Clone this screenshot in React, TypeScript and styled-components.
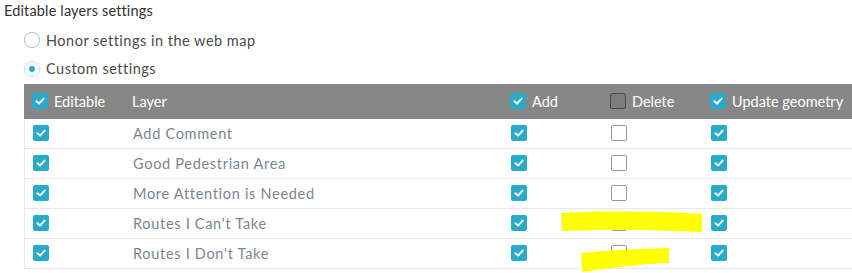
import React from "react";
import styled, { createGlobalStyle } from "styled-components";

const Global = createGlobalStyle`
  html, body { margin: 0; padding: 0; background: #fff; }
  body { font-family: Lato, "Noto Sans", "Liberation Sans", sans-serif; width: 852px; height: 273px; overflow: hidden; }
`;

const Page = styled.div`
  position: relative;
  width: 852px;
  height: 273px;
  overflow: hidden;
`;

const Title = styled.div`
  font-size: 14.5px;
  letter-spacing: 0.15px;
  color: #323232;
  padding: 2px 0 0 4px;
  height: 20px;
  line-height: 18px;
`;

const RadioGroup = styled.div`
  display: flex;
  flex-direction: column;
  padding-left: 24px;
  margin-top: 8px;
  gap: 8.5px;
`;

const RadioRow = styled.label`
  display: flex;
  align-items: center;
  gap: 6px;
  height: 20px;
  font-size: 14.5px;
  letter-spacing: 0.5px;
  color: #4a4a4a;
`;

const RadioCircle = styled.span<{ $on?: boolean }>`
  width: 14px;
  height: 14px;
  border-radius: 50%;
  border: 1px solid ${(p) => (p.$on ? "#b9dfe8" : "#b8b8b8")};
  background: #fff;
  display: flex;
  align-items: center;
  justify-content: center;
  &::after {
    content: "";
    display: ${(p) => (p.$on ? "block" : "none")};
    width: 6px;
    height: 6px;
    border-radius: 50%;
    background: #2aa9c6;
  }
`;

const Table = styled.div`
  margin: 5px 0 0 24px;
  width: 828px;
`;

const cols = "100px 378px 100px 100px 1fr";

const HeaderRow = styled.div`
  display: grid;
  grid-template-columns: ${cols};
  height: 35px;
  background: #878787;
  align-items: center;
`;

const Row = styled.div`
  display: grid;
  grid-template-columns: ${cols};
  height: 29px;
  border-bottom: 1px solid #e9e9e9;
  border-left: 1px solid #ececec;
  align-items: center;
`;

const Cell = styled.div<{ $head?: boolean }>`
  display: flex;
  align-items: center;
  gap: 6px;
  padding-left: 8px;
  font-size: 14.5px;
  letter-spacing: ${(p) => (p.$head ? "0" : "0.7px")};
  color: ${(p) => (p.$head ? "#ffffff" : "#7a8593")};
  white-space: nowrap;
`;

const Box = styled.span<{ $on?: boolean; $head?: boolean }>`
  box-sizing: border-box;
  width: 16px;
  height: 16px;
  border-radius: 2px;
  flex: none;
  display: flex;
  align-items: center;
  justify-content: center;
  background: ${(p) => (p.$on ? "#28abcb" : p.$head ? "#7d7d7d" : "#ffffff")};
  border: ${(p) => (p.$on ? "none" : p.$head ? "1px solid #4c4c4c" : "1px solid #9a9a9a")};
`;

const Check = ({ on, head }: { on?: boolean; head?: boolean }) => (
  <Box $on={on} $head={head}>
    {on && (
      <svg width="12" height="12" viewBox="0 0 12 12">
        <path d="M2.4 6.2 L5 8.6 L9.6 3.6" fill="none" stroke="#fff" strokeWidth="2" strokeLinecap="round" strokeLinejoin="round" />
      </svg>
    )}
  </Box>
);

const Highlights = styled.svg`
  position: absolute;
  left: 0;
  top: 0;
  pointer-events: none;
`;

const layers = [
  "Add Comment",
  "Good Pedestrian Area",
  "More Attention is Needed",
  "Routes I Can't Take",
  "Routes I Don't Take",
];

export default function App() {
  return (
    <Page>
      <Global />
      <Title>Editable layers settings</Title>
      <RadioGroup>
        <RadioRow>
          <RadioCircle />
          Honor settings in the web map
        </RadioRow>
        <RadioRow>
          <RadioCircle $on />
          Custom settings
        </RadioRow>
      </RadioGroup>
      <Table>
        <HeaderRow>
          <Cell $head>
            <Check on head />
            Editable
          </Cell>
          <Cell $head>Layer</Cell>
          <Cell $head>
            <Check on head />
            Add
          </Cell>
          <Cell $head>
            <Check head />
            Delete
          </Cell>
          <Cell $head>
            <Check on head />
            Update geometry
          </Cell>
        </HeaderRow>
        {layers.map((l) => (
          <Row key={l}>
            <Cell>
              <Check on />
            </Cell>
            <Cell>{l}</Cell>
            <Cell>
              <Check on />
            </Cell>
            <Cell>
              <Check />
            </Cell>
            <Cell>
              <Check on />
            </Cell>
          </Row>
        ))}
      </Table>
      <Highlights width="852" height="273" viewBox="0 0 852 273">
        <path
          d="M561 213 C600 211 650 211 702 214 L702 232 C660 230 620 229 562 231 Z"
          fill="#ffff00"
        />
        <path
          d="M581 253 C610 250 640 249 669 248 L669 263 C640 264 610 268 582 272 Z"
          fill="#ffff00"
        />
      </Highlights>
    </Page>
  );
}
